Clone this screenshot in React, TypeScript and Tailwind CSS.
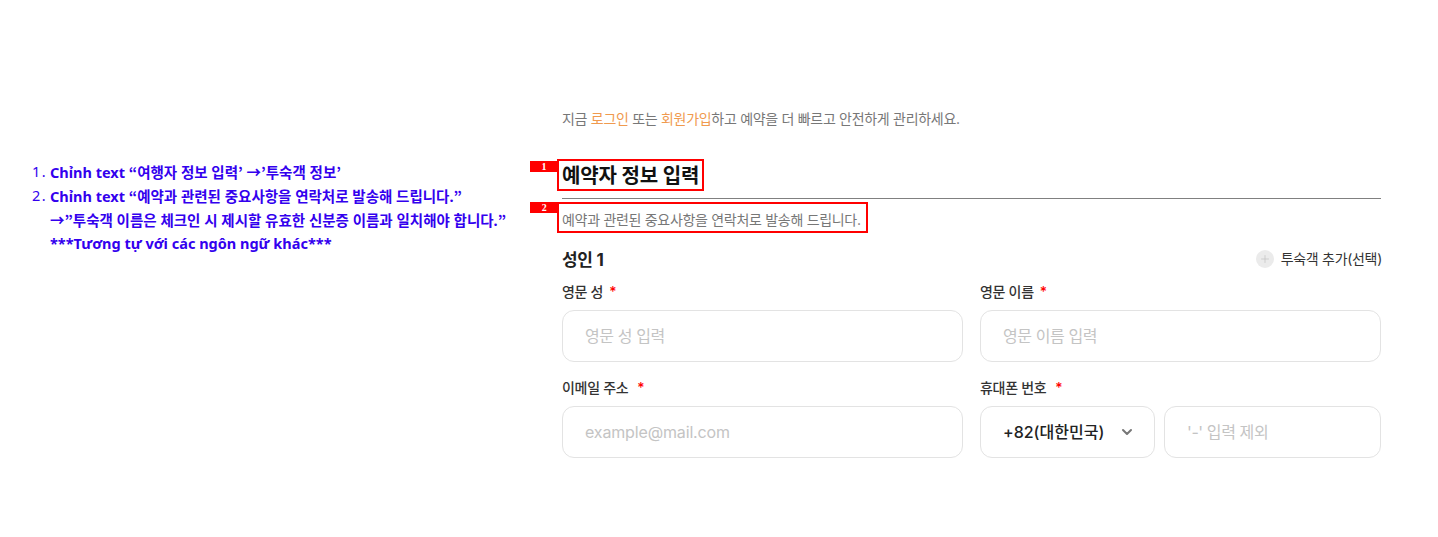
import type { ReactNode } from "react";
import { ChevronDown, Plus } from "lucide-react";

const uiFont = "font-['Inter','Noto_Sans_CJK_KR',sans-serif]";

function Q({ children }: { children: ReactNode }) {
  return <span className="font-['Noto_Sans_CJK_KR',sans-serif]">{children}</span>;
}

function Label({ text, gap }: { text: string; gap: string }) {
  return (
    <div className="flex items-center h-[20px] text-[14px] font-medium text-[#333] tracking-[-0.3px]">
      <span>{text}</span>
      <span className={`${gap} text-[#f00]`}>*</span>
    </div>
  );
}

function TextInput({ placeholder, className }: { placeholder: string; className: string }) {
  return (
    <input
      placeholder={placeholder}
      className={`h-[52px] rounded-[12px] border border-[#e3e3e3] bg-white pl-[22px] text-[16px] outline-none placeholder:text-[#c4c4c4] ${className}`}
    />
  );
}

function Marker({ n, className }: { n: number; className: string }) {
  return (
    <div
      className={`absolute flex h-[11px] w-[28px] items-center justify-center bg-[#f00] font-['Liberation_Serif',serif] text-[10px] font-bold leading-none text-white ${className}`}
    >
      {n}
    </div>
  );
}

export default function App() {
  return (
    <div className="flex h-[537px] w-[1438px] overflow-hidden bg-white">
      {/* Notes */}
      <div className="w-[562px] shrink-0 pl-[32px] pt-[160px] font-['Noto_Sans','Noto_Sans_CJK_KR',sans-serif] text-[14.5px] font-bold leading-[23.7px] text-[#3300ee]">
        <div className="flex h-[24px]">
          <span className="w-[18px] font-normal tracking-[1.5px]">1.</span>
          <span>Chỉnh text <Q>“</Q>여행자 정보 입력<Q>’</Q> →<Q>’</Q>투숙객 정보<Q>’</Q></span>
        </div>
        <div className="flex h-[24px]">
          <span className="w-[18px] font-normal tracking-[1.5px]">2.</span>
          <span>Chỉnh text <Q>“</Q>예약과 관련된 중요사항을 연락처로 발송해 드립니다.<Q>”</Q></span>
        </div>
        <div className="h-[24px] pl-[18px]">→<Q>”</Q>투숙객 이름은 체크인 시 제시할 유효한 신분증 이름과 일치해야 합니다.<Q>”</Q></div>
        <div className="h-[24px] pl-[18px]">***Tương tự với các ngôn ngữ khác***</div>
      </div>

      {/* Form */}
      <div className={`w-[819px] shrink-0 pt-[108px] ${uiFont}`}>
        <p className="h-[22px] text-[14px] leading-[22px] tracking-[-0.3px] text-[#777]">
          지금 <span className="text-[#f09a4e]">로그인</span> 또는{" "}
          <span className="text-[#f09a4e]">회원가입</span>하고 예약을 더 빠르고 안전하게 관리하세요.
        </p>

        <div className="relative mt-[29px] flex h-[40px] items-center border-b border-[#808080] pb-[5px]">
          <h2 className="text-[20px] font-bold tracking-[-0.1px] text-[#111]">예약자 정보 입력</h2>
          <div className="absolute left-[-5px] top-0 h-[32px] w-[147px] border-2 border-[#f00]" />
          <Marker n={1} className="left-[-32px] top-[2px]" />
        </div>

        <div className="relative mt-[11px] h-[20px] text-[14px] leading-[20px] tracking-[-0.3px] text-[#777]">
          예약과 관련된 중요사항을 연락처로 발송해 드립니다.
          <div className="absolute left-[-5px] top-[-8px] h-[31px] w-[311px] border-2 border-[#f00]" />
          <Marker n={2} className="left-[-32px] top-[-8px]" />
        </div>

        <div className="mt-[17px] flex h-[24px] items-center justify-between">
          <span className="pt-[3px] text-[17px] font-bold tracking-[-0.3px] text-[#222]">성인 1</span>
          <div className="-mr-[1px] flex items-center gap-[7px] pb-[1px] text-[14px] tracking-[-0.3px] text-[#333]">
            <span className="flex h-[18px] w-[18px] items-center justify-center rounded-full bg-[#ebebeb]">
              <Plus size={12} strokeWidth={1.5} className="text-[#c4c4c4]" />
            </span>
            <span>투숙객 추가(선택)</span>
          </div>
        </div>

        <div className="mt-[10px] grid grid-cols-[401px_401px] gap-x-[17px]">
          <div>
            <Label text="영문 성" gap="ml-[6px]" />
            <TextInput placeholder="영문 성 입력" className="mt-[9px] w-full tracking-[-0.4px]" />
          </div>
          <div>
            <Label text="영문 이름" gap="ml-[6px]" />
            <TextInput placeholder="영문 이름 입력" className="mt-[9px] w-full tracking-[-0.4px]" />
          </div>
          <div className="mt-[15px]">
            <Label text="이메일 주소" gap="ml-[9px]" />
            <TextInput placeholder="example@mail.com" className="mt-[9px] w-full tracking-[-0.15px]" />
          </div>
          <div className="mt-[15px]">
            <Label text="휴대폰 번호" gap="ml-[9px]" />
            <div className="mt-[9px] flex gap-[9px]">
              <div className="flex h-[52px] w-[175px] items-center justify-between rounded-[12px] border border-[#e3e3e3] pl-[22px] pr-[19px] text-[16px] font-medium text-[#222]">
                <span>+82(대한민국)</span>
                <ChevronDown size={16} strokeWidth={3} className="text-[#777]" />
              </div>
              <TextInput placeholder="'-' 입력 제외" className="w-[217px] tracking-[-0.4px]" />
            </div>
          </div>
        </div>
      </div>
    </div>
  );
}
